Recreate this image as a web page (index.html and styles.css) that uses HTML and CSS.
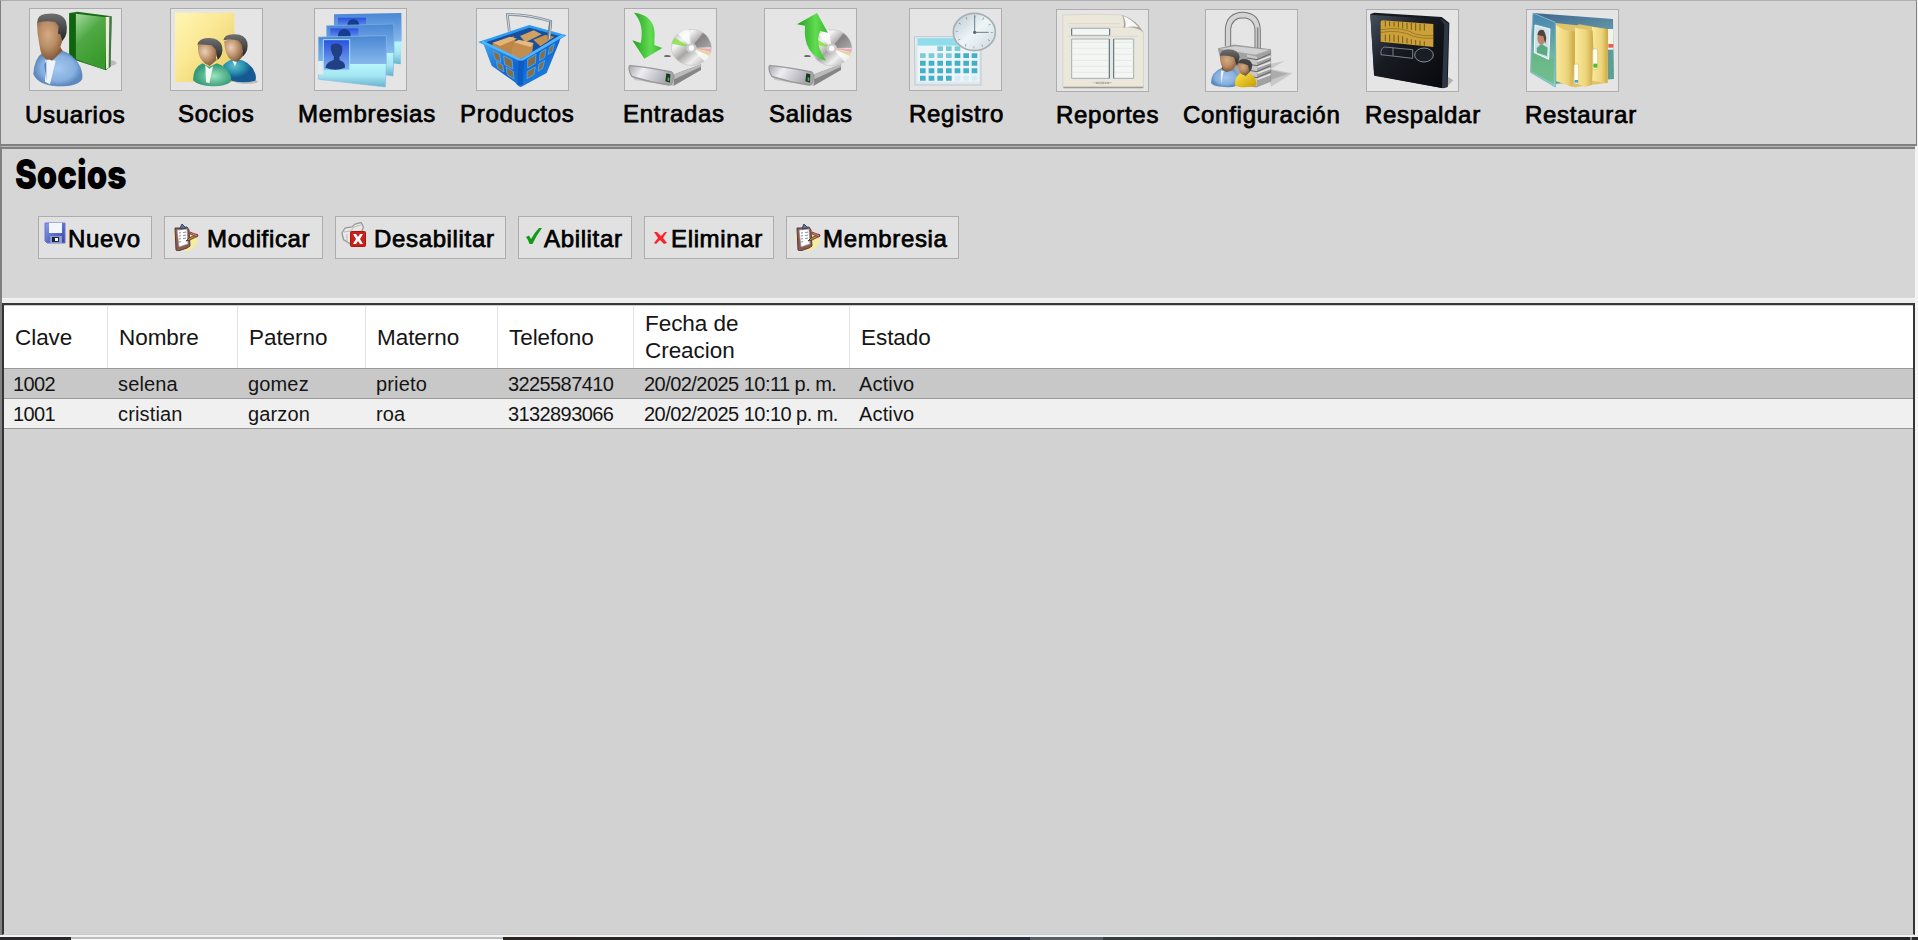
FILE: index.html
```html
<!DOCTYPE html>
<html lang="es">
<head>
<meta charset="utf-8">
<title>Socios</title>
<link rel="stylesheet" href="styles.css">
</head>
<body>
<svg class="defs" width="0" height="0">
  <defs>
    <radialGradient id="skin" cx=".4" cy=".4" r=".65"><stop offset="0" stop-color="#d5aa85"/><stop offset=".5" stop-color="#b88c64"/><stop offset="1" stop-color="#7c5233"/></radialGradient>
    <radialGradient id="pale" cx=".35" cy=".4" r=".65"><stop offset="0" stop-color="#ebd0b8"/><stop offset=".5" stop-color="#c59a76"/><stop offset="1" stop-color="#8b6040"/></radialGradient>
    <linearGradient id="hair" x2="0" y2="1"><stop offset="0" stop-color="#707070"/><stop offset="1" stop-color="#252525"/></linearGradient>
    <radialGradient id="blue" cx=".5" cy=".5"><stop offset="0" stop-color="#a5c8ef"/><stop offset=".7" stop-color="#86b0e0"/><stop offset="1" stop-color="#5c88be"/></radialGradient>
    <linearGradient id="book" x2=".5" y2="1"><stop offset="0" stop-color="#a6dca0"/><stop offset=".45" stop-color="#50a845"/><stop offset="1" stop-color="#389a2c"/></linearGradient>
    <linearGradient id="note" x2="1" y2="1"><stop offset="0" stop-color="#fff6b5"/><stop offset=".4" stop-color="#fbe996"/><stop offset="1" stop-color="#e7cb60"/></linearGradient>
    <radialGradient id="mint" cx=".55" cy=".55"><stop offset="0" stop-color="#98e5bd"/><stop offset="1" stop-color="#359a78"/></radialGradient>
    <radialGradient id="teal" cx=".35" cy=".3"><stop offset="0" stop-color="#68bdcc"/><stop offset=".6" stop-color="#288fae"/><stop offset="1" stop-color="#165a94"/></radialGradient>
    <linearGradient id="card" x2="0" y2="1"><stop offset="0" stop-color="#4a86d4"/><stop offset=".55" stop-color="#86b9ec"/><stop offset=".56" stop-color="#b5f6fb"/><stop offset=".78" stop-color="#a6e6f2"/><stop offset="1" stop-color="#67b1ce"/></linearGradient>
    <linearGradient id="photo" x2="0" y2="1"><stop offset="0" stop-color="#2b50e0"/><stop offset="1" stop-color="#7eb5ed"/></linearGradient>
    <linearGradient id="basket" x2="1" y2="1"><stop offset="0" stop-color="#49b1f5"/><stop offset=".5" stop-color="#1464cd"/><stop offset="1" stop-color="#238be3"/></linearGradient>
    <linearGradient id="arrow" x2="1"><stop offset="0" stop-color="#239d24"/><stop offset=".6" stop-color="#62dc50"/><stop offset="1" stop-color="#35b932"/></linearGradient>
    <linearGradient id="steel" x2="1" y2=".3"><stop offset="0" stop-color="#a5a5aa"/><stop offset=".35" stop-color="#ededf2"/><stop offset="1" stop-color="#a5a5ad"/></linearGradient>
    <linearGradient id="disc" x2="1" y2="1"><stop offset="0" stop-color="#a8a8a8"/><stop offset=".28" stop-color="#f5f5f5"/><stop offset=".5" stop-color="#a9a5a5"/><stop offset=".7" stop-color="#efefef"/><stop offset="1" stop-color="#999"/></linearGradient>
    <linearGradient id="face" x2="1" y2="1"><stop offset="0" stop-color="#b7c7d0"/><stop offset=".5" stop-color="#eef5f7"/><stop offset="1" stop-color="#ccd9de"/></linearGradient>
    <linearGradient id="gold" x2="1" y2="1"><stop offset="0" stop-color="#ffe94f"/><stop offset="1" stop-color="#c59a00"/></linearGradient>
    <linearGradient id="ink" x2="1" y2="1"><stop offset="0" stop-color="#46505e"/><stop offset=".4" stop-color="#191b23"/><stop offset="1" stop-color="#07080c"/></linearGradient>
    <linearGradient id="cover" x2="0" y2="1"><stop offset="0" stop-color="#4783b1"/><stop offset=".55" stop-color="#6fb4a1"/><stop offset="1" stop-color="#89d6c4"/></linearGradient>
    <linearGradient id="back" x2=".3" y2="1"><stop offset="0" stop-color="#3f638d"/><stop offset=".5" stop-color="#6299a8"/><stop offset="1" stop-color="#5e9f93"/></linearGradient>
    <linearGradient id="folder" x2="1"><stop offset="0" stop-color="#faea9c"/><stop offset=".6" stop-color="#ecd47c"/><stop offset="1" stop-color="#cca743"/></linearGradient>
    <linearGradient id="floppy" x2="1" y2="1"><stop offset="0" stop-color="#8aa0f0"/><stop offset="1" stop-color="#3440a5"/></linearGradient>
    <g id="drive">
      <path d="M632 198l90-36 40-4 84 36-4 15-80 48-118-18z" fill="#c9c9c9"/>
      <path d="M632 197l72-34q50-12 88 2l52 28-80 31z" fill="#e6e6e6"/>
      <path d="M764 222l80-30v17l-82 47z" fill="#858585"/><path d="M764 222l80-30v7l-80 38z" fill="#bbb"/>
      <path d="M634 196q66 7 122 19 8 4 4 24-2 16-13 15-56-8-106-24-8-2-12-20-3-17 5-14z" fill="url(#steel)" stroke="#999" stroke-width="4"/>
      <path d="M740 219l12 3-1 25-14-4z" fill="#183820"/><path d="M744 231l5 1v10l-5-1z" fill="#54aa55"/>
      <path d="M733 166q10-4 21 1l-3 3h-16z" fill="#666"/>
    </g>
    <g id="cd">
      <ellipse cx="815" cy="141" rx="60" ry="54" fill="url(#disc)" stroke="#c5c5c5" stroke-width="2"/>
      <path d="M815 142L775 101q16-13 32-14zM815 142l58 16q-6 16-18 25z" fill="#fff" opacity=".75"/>
      <path d="M815 142l35-45q23 18 25 44z" fill="#716e70" opacity=".6"/>
      <path d="M815 142l-58-12q2-10 8-18z" fill="#79e030" opacity=".75"/>
      <path d="M815 142l60 3-2 9z" fill="#eeabb5"/><path d="M815 142l58 14-4 10z" fill="#e5d6a0"/>
      <ellipse cx="815" cy="143" rx="16" ry="14" fill="#ccc"/><circle cx="815" cy="143" r="8" fill="#fff"/>
    </g>
    <g id="clipboard">
      <path d="M0 13l7-5 2-5 4 4 10 3 3 9-4 6-9 4z" fill="#fff17a" opacity=".65"/>
      <path d="M3 5l4 0 8-1 2 3 1 16-3 2-9 3-2-1z" fill="#8c5b4e" stroke="#563b3c"/>
      <path d="M5 7l10-1 1 15-9 3z" fill="#fff" stroke="#938a92" stroke-width=".7"/>
      <path d="M7 10l2-.3m2-.2l3-.4M7 13l2-.3m2-.2l3-.4M7 16l2-.3m2-.2l3-.4M7 19l2-.3" stroke="#8a8b9b"/>
      <path d="M8 6l1-3 1-2 2 2 2 2z" fill="#62739c" stroke="#38435e"/>
      <path d="M14 18l3-3 8-4 1 2-8 4z" fill="#bd863b" stroke="#493527" stroke-width=".8"/><path d="M18 9l8 3-1 2-7-3z" fill="#e0707b" stroke="#693c43" stroke-width=".8"/>
    </g>
  </defs>
</svg>

<div class="app">
  <nav class="toolbar">
    <a class="tool usuarios">
      <svg class="tile" viewBox="90 26 273 243" preserveAspectRatio="none">
        <ellipse cx="320" cy="188" rx="30" ry="10" fill="#bbb"/>
        <path d="M208 38l24-4 103 14-4 150-13 12-110-36z" fill="#176e18"/>
        <path d="M316 50l18-1-3 150-13 8z" fill="#eee9d8"/><path d="M328 50l7-1-3 150-6 5z" fill="#407746"/>
        <path d="M227 40l90 11-2 158-88-33z" fill="url(#book)"/><path d="M208 39l19 2v136l-19-8z" fill="#116310"/>
        <path d="M101 222q3-50 30-66l22 12 26-18q42 10 61 50 9 23 5 38-14 20-72 19-58-3-72-35z" fill="url(#blue)" stroke="#5b84b5" stroke-width="2"/>
        <path d="M135 181l18-5 14 6-17 70-15-8z" fill="#f0f4fa"/><path d="M140 172l16 9 32-30-8-12-29 5z" fill="#8a5b38"/><path d="M139 180l-6 14 6 48z" fill="#5a80b4"/>
        <path d="M111 66q34-21 76-3 11 23 2 53l-9 27q-18 42-42 33-15-6-19-38-8-35-8-72z" fill="url(#skin)"/>
        <path d="M112 67q-1-23 23-26 52-8 63 22 9 39-11 59l-6-20-7-2 2-22-10-13q-29-5-54 2z" fill="url(#hair)"/>
      </svg>
      <span class="label">Usuarios</span>
    </a>
    <a class="tool socios">
      <svg class="tile" viewBox="513 26 273 243" preserveAspectRatio="none">
        <path d="M525 37h178v208H525z" fill="url(#note)"/>
        <ellipse cx="740" cy="244" rx="34" ry="7" fill="#bcbcb8"/>
        <path d="M669 195q18-19 40-20 42 6 56 43 5 12 1 23-40 11-80-2z" fill="url(#teal)"/>
        <path d="M695 176l18 8 20-21-8-12-22 2z" fill="#815638"/><path d="M697 181l13 5-5 12z" fill="#edf4fa"/>
        <path d="M673 123q25-15 56-2 5 41-20 61-14 2-24-12-12-18-12-47z" fill="url(#pale)"/>
        <path d="M670 120q3-19 33-18 31-1 39 24 5 26-13 42l-3-34-10-13q-22-6-46-1z" fill="url(#hair)"/>
        <path d="M579 240q0-38 28-51l21 10 23-10q29 10 40 36 5 12 0 21-18 13-54 12-42-1-58-18z" fill="url(#mint)"/>
        <path d="M616 194l12 12 11-8-11 51-10-4z" fill="#f4f8f3"/><path d="M614 181l14 17 22-19-6-16z" fill="#8d6040"/>
        <path d="M594 134q24-13 56 1 10 28-12 53-18 13-31-7-15-16-13-47z" fill="url(#pale)"/>
        <path d="M592 133q5-21 35-20 31 0 39 24 6 24-13 42l-6-32-12-12q-23-3-43-2z" fill="url(#hair)"/>
      </svg>
      <span class="label">Socios</span>
    </a>
    <a class="tool membresias">
      <svg class="tile" viewBox="945 26 273 243" preserveAspectRatio="none">
        <path d="M1002 42l202-4q3 78-2 154l-35-5-165-30z" fill="url(#card)"/><path d="M1014 52h84v40h-84z" fill="url(#photo)"/><circle cx="1060" cy="74" r="18" fill="#173b8f"/>
        <path d="M980 76l201-5q3 80-2 156l-40-7-159-35z" fill="url(#card)" stroke="#7db0e0" stroke-width="2"/><path d="M991 84h84v40h-84z" fill="url(#photo)"/><circle cx="1033" cy="105" r="19" fill="#173b8f"/>
        <path d="M955 110l204-4q2 78-3 154L956 237z" fill="url(#card)" stroke="#8abae5" stroke-width="2"/>
        <path d="M954 182h16v40h-16z" fill="#e4e9ec"/>
        <path d="M970 118h79v91h-79z" fill="url(#photo)" stroke="#a6e4ff" stroke-width="3"/>
        <path d="M976 202q3-17 25-23l1-10q-14-20-8-36 18-9 31 3 7 20-7 34l1 10q18 5 16 22-28 12-59 0z" fill="#213f85"/>
      </svg>
      <span class="label">Membresias</span>
    </a>
    <a class="tool productos">
      <svg class="tile" viewBox="171 26 273 243" preserveAspectRatio="none">
        <path d="M185 126l143-48 102 28-124 78z" fill="#174f9b" stroke="#2d9df2" stroke-width="8"/>
        <path d="M268 93l-6-50q56-3 130 20l-6 55" fill="none" stroke="#7f8b98" stroke-width="8"/><path d="M268 93l-6-50q56-3 130 20l-6 55" fill="none" stroke="#d5dce2" stroke-width="3"/>
        <path d="M217 129l64-21 12 31-20 31-52-22z" fill="#bd8547"/><path d="M218 127l53-18 20 6-51 22z" fill="#e4b477"/>
        <path d="M300 107l41-17 24 12-49 24z" fill="#d1a064"/><path d="M340 118l35-14 28 5-42 29z" fill="#c98f4f"/>
        <path d="M278 137l9-14 53 9-7 47-60-7z" fill="#c48d50"/><path d="M282 126l14-8 45 10-9 12z" fill="#e6bb7e"/>
        <path d="M187 122l10 11 104 44 124-76-7 24-38 93-77 42q-8 0-18-14l-70-50z" fill="url(#basket)"/>
        <g fill="#8a6c42" stroke="#42a5ee" stroke-width="3"><path d="M218 152l20 9 5 25-18-9zM251 167l25 12 3 27-25-13zM229 184l19 10 4 21-19-12zM258 200l22 13 2 23-20-13z"/><path d="M323 177l25-15-2 27-23 14zM361 157l17-11-4 25-16 10zM389 140l14-10-6 24-13 8zM322 213l24-13-4 23-21 12zM357 191l17-11-6 24-14 9z"/></g>
        <path d="M186 124l117 56 127-76" fill="none" stroke="#50b5fc" stroke-width="8"/><path d="M303 181l-2 73" stroke="#0d5cc4" stroke-width="16"/>
        <path d="M386 116l6-52" stroke="#6f7e8c" stroke-width="9"/><path d="M388 116l5-52" stroke="#cbd3d9" stroke-width="3"/>
      </svg>
      <span class="label">Productos</span>
    </a>
    <a class="tool entradas">
      <svg class="tile" viewBox="616 26 273 243" preserveAspectRatio="none">
        <use href="#drive"/><use href="#cd"/>
        <path d="M643 37q60 7 62 63l-1 34 24 9-54 32-36-55 25 8q12-55-20-91z" fill="url(#arrow)"/>
      </svg>
      <span class="label">Entradas</span>
    </a>
    <a class="tool salidas">
      <svg class="tile" viewBox="1035 26 273 243" preserveAspectRatio="none">
        <use href="#drive" x="419"/><use href="#cd" x="420" y="1"/>
        <path d="M1131 72l60-34 33 59-23-5q-19 38 17 89-70-17-63-105z" fill="url(#arrow)"/>
      </svg>
      <span class="label">Salidas</span>
    </a>
    <a class="tool registro">
      <svg class="tile" viewBox="92 26 273 243" preserveAspectRatio="none">
        <path d="M105 109h200v145H107z" fill="#e0e8ec" stroke="#bccbd3" stroke-width="3"/><path d="M115 114h180v22H115z" fill="#8fdcea"/><path d="M115 136h184v108H115z" fill="#eef5f8"/>
        <g fill="#7dcbd5"><path d="M174 138h17v14h-17zM200 138h17v14h-17zM226 138h17v14h-17zM122 159h17v14h-17zM148 159h17v14h-17zM174 159h17v14h-17zM200 159h17v14h-17z"/></g>
        <g fill="#43afc8"><path d="M226 159h17v14h-17zM252 159h17v14h-17zM277 159h17v14h-17zM122 181h17v15h-17zM148 181h17v15h-17zM174 181h17v15h-17zM200 181h17v15h-17zM226 181h17v15h-17zM252 181h17v15h-17zM277 181h17v15h-17zM122 204h17v15h-17zM148 204h17v15h-17zM174 204h17v15h-17zM200 204h17v15h-17zM226 204h17v15h-17zM252 204h17v15h-17zM277 204h17v15h-17zM122 226h17v15h-17zM148 226h17v15h-17zM174 226h17v15h-17zM200 226h17v15h-17z"/></g>
        <path d="M226 226h17v15h-17zM252 226h17v15h-17zM277 226h17v15h-17z" fill="#d6edf5"/>
        <ellipse cx="285" cy="95" rx="63" ry="56" fill="url(#face)" stroke="#a8afb2" stroke-width="5"/>
        <ellipse cx="285" cy="95" rx="52" ry="46" fill="none" stroke="#7b898f" stroke-width="7" stroke-dasharray="2 23.6"/>
        <path d="M286 45v51h42" fill="none" stroke="#6a7f8b" stroke-width="3"/><circle cx="286" cy="96" r="5" fill="#526c79"/>
      </svg>
      <span class="label">Registro</span>
    </a>
    <a class="tool reportes low">
      <svg class="tile" viewBox="533 31 273 243" preserveAspectRatio="none">
        <path d="M552 257h240v9H552z" fill="#9a978f"/><path d="M550 46q100-4 178 0 38 15 64 50v165H550z" fill="#ece7db" stroke="#d1cbbd" stroke-width="2"/>
        <path d="M566 72h156M566 82h210M566 110h210" stroke="#d4d1c7" stroke-width="2"/>
        <path d="M577 86h114v21H577zM577 118h113v118H577zM703 118h60v118h-60z" fill="#f4f6f3" stroke="#9db0ba" stroke-width="3"/>
        <path d="M577 128h113m-113 18h113m-113 18h113m-113 18h113m-113 18h113m-113 18h113M703 128h60m-60 18h60m-60 18h60m-60 18h60m-60 18h60m-60 18h60" stroke="#dce0db" stroke-width="2"/>
        <path d="M577 87v20m114-20v20m-1 11v118m13-118v118" stroke="#54758a" stroke-width="3"/>
        <path d="M728 46q9 20 4 38 35-5 60 14-20-38-64-52z" fill="#aaa79f"/><path d="M732 49q24 9 45 33-20-4-39 2 3-18-6-35z" fill="#f8f8f4"/>
        <path d="M640 249q28-6 58 0-28 8-58 0" fill="none" stroke="#ccc8bd" stroke-width="2"/><path d="M650 250h40" stroke="#8a8880" stroke-width="3" stroke-dasharray="8 2 4 2"/>
      </svg>
      <span class="label">Reportes</span>
    </a>
    <a class="tool configuracion low">
      <svg class="tile" viewBox="979 31 273 243" preserveAspectRatio="none">
        <path d="M1162 195l54-12-43 25 65 13-64 40z" fill="#c8c8c8"/><path d="M1174 211l50 11-51 19z" fill="#999" opacity=".6"/>
        <path d="M1045 139V88q4-41 45-42 43 2 44 47v59" fill="none" stroke="#757575" stroke-width="19"/><path d="M1045 139V88q4-41 45-42 43 2 44 47v59" fill="none" stroke="#d4d4d4" stroke-width="13"/><path d="M1134 83v69" stroke="#888" stroke-width="5"/>
        <path d="M1016 147l47-11 110 14v95l-43 17-90-16z" fill="#a2a2a2" stroke="#888" stroke-width="2"/><path d="M1020 148l45-8 104 11-42 14z" fill="#d1d1d1"/>
        <path d="M1102 164l30 7v87l-30-8z" fill="#c8c8c8"/><path d="M1102 175l30 5 41-18m-71 31l30 5 41-18m-71 31l30 5 41-18m-71 31l30 5 41-18" fill="none" stroke="#666" stroke-width="3"/><path d="M1133 185l40-15m-40 33l40-15m-40 33l40-15m-40 33l40-15" stroke="#e8e8e8" stroke-width="5"/>
        <path d="M994 250q1-34 31-44l13 8 17-11q22 13 26 47-8 15-48 12-34-2-39-12z" fill="url(#blue)"/><path d="M1025 207l15 10 25-18-8-16-24 6z" fill="#784c2d"/><path d="M1024 213l8 1-8 40z" fill="#eef4fa"/>
        <path d="M1021 163q24-12 52 4 6 25-16 45-20 12-29-10-8-13-7-39z" fill="url(#skin)"/><path d="M1021 168q2-19 25-19 30 0 34 23l-8 28-9-27q-21-8-42-5z" fill="url(#hair)"/>
        <path d="M1065 255q1-29 25-37l8 10 12-9q20 13 21 35-8 9-36 9-24 0-30-8z" fill="url(#gold)"/><path d="M1085 215l12 15 14-14-5-12z" fill="#825332"/>
        <path d="M1075 189q18-7 37 1 3 19-11 34-15 7-21-10-5-10-5-25z" fill="url(#skin)"/><path d="M1074 190q4-12 20-12 20 0 24 18 0 13-8 21l-5-20q-15-7-31-7z" fill="#444"/>
      </svg>
      <span class="label">Configuración</span>
    </a>
    <a class="tool respaldar low">
      <svg class="tile" viewBox="51 31 273 243" preserveAspectRatio="none">
        <path d="M288 228l22 14-20 20z" fill="#b0b0b0"/>
        <path d="M61 43l12-4 202 13 23 18-5 192-14 4-206-38z" fill="#14181f"/>
        <path d="M61 45l208 14 18 16-10 190-205-38z" fill="url(#ink)"/>
        <path d="M269 55l27 17-6 190-14 3 7-190z" fill="#2e3745"/>
        <path d="M96 62l154 11v69L92 126V66z" fill="#cda137"/>
        <path d="M106 64v17m13-16v15m13-14v15m13-14v16m13-15v18m13-17v20m13-19v21m13-20v22m13-21v21m13-20v20M106 105v19m13-19v20m13-20v22m13-20v21m13-18v20m13-15v16m13-12v14m13-12v14m13-12v14m13-12v13" stroke="#705a20" stroke-width="3"/>
        <path d="M93 90q62-11 102 13 24 7 54 5M93 98q57-9 98 12 24 8 58 6" fill="none" stroke="#806622" stroke-width="2"/>
        <path d="M104 142l84 8v26L93 165q-2-20 11-23zM129 144v24" fill="none" stroke="#8d939d" stroke-width="2.5"/><ellipse cx="222" cy="166" rx="28" ry="21" fill="#191d24" stroke="#a0a4ac" stroke-width="2.5"/>
      </svg>
      <span class="label">Respaldar</span>
    </a>
    <a class="tool restaurar low">
      <svg class="tile" viewBox="531 31 273 243" preserveAspectRatio="none">
        <path d="M549 40l240 18 3 180-180 15z" fill="url(#back)"/>
        <path d="M618 70l62 7 8-3 86 15v160l-100 14-56-18z" fill="#dfc36b"/>
        <path d="M774 88h16v62h-16z" fill="#f5f2e9"/><path d="M775 133h15v11h-15z" fill="#ee5b4d"/>
        <path d="M726 82l48 7-2 162-46-8z" fill="url(#folder)"/>
        <path d="M675 84l53 9 2 56-4 106-20 7-31-12z" fill="url(#folder)"/>
        <path d="M618 76l24 14 32 5v99l-8 67-46-17z" fill="url(#folder)"/>
        <rect x="728" y="147" width="15" height="62" rx="6" fill="#fffdf2" stroke="#d9bf62" stroke-width="2"/><path d="M730 192h12v12h-12z" fill="#57ba34"/>
        <rect x="672" y="193" width="14" height="60" rx="6" fill="#fffdf2" stroke="#d9bf62" stroke-width="2"/><path d="M674 241h10v8h-10z" fill="#4ca5d1"/>
        <path d="M549 40l67 28v194l-74-44 3-110z" fill="url(#cover)" stroke="#81b7c8" stroke-width="3"/><path d="M545 162l66 14v77l-67-38z" fill="#66b574" opacity=".65"/>
        <path d="M555 76l45 12-4 91-43-20z" fill="#d0e1eb" stroke="#f0fafd" stroke-width="3"/>
        <path d="M560 145l14-13 19 12-2 25-30-10z" fill="#5aa980"/><ellipse cx="574" cy="115" rx="12" ry="20" fill="#bb866a"/><path d="M562 106q3-20 19-14 12 19 5 41l-6-23z" fill="#51453c"/>
      </svg>
      <span class="label">Restaurar</span>
    </a>
  </nav>

  <main class="panel">
    <header class="panel-head">
      <h1>Socios</h1>
      <div class="actions">
        <button class="btn nuevo"><svg viewBox="0 0 22 22"><path d="M1 1h20v20H3l-2-2z" fill="url(#floppy)" stroke="#6a75cc"/><path d="M5 1h13v10H5z" fill="#f1f6ff"/><path d="M6 14h12v7H6z" fill="#8d9cc8"/><path d="M8 15h7v5H8z" fill="#182444"/><path d="M11 16h3v3h-3z" fill="#fff"/></svg><span>Nuevo</span></button>
        <button class="btn modificar"><svg viewBox="0 0 28 28"><use href="#clipboard"/></svg><span>Modificar</span></button>
        <button class="btn desabilitar"><svg viewBox="0 0 26 26"><path d="M1 11l3-5 7-1 3-3 6-1.500 2.500 4.500-2 5-1 11-11 .5-6-4z" fill="#e8e8e6" stroke="#999" stroke-width="1.300"/><path d="M3 10l7-1 3-4 7-2M6 12v9M11 10l10-1" fill="none" stroke="#bbb"/><rect x="9.500" y="9.500" width="15" height="15" rx="1" fill="#c92117" stroke="#a51812"/><path d="M12 12h3l2 3 2-3h3l-3 5 3 5h-3l-2-3-2 3h-3l3-5z" fill="#fff"/></svg><span>Desabilitar</span></button>
        <button class="btn abilitar"><svg viewBox="0 0 16 17"><path d="M0 9l3-1.500 2 3.500Q9 4 13 0h3Q10 8 6.500 16H3.500Q2.500 12 0 9z" fill="#139a18"/></svg><span>Abilitar</span></button>
        <button class="btn eliminar"><svg viewBox="0 0 15 14"><path d="M1 1h3l4 4 4-4h2l-4 6 4 5-3 1-4-4-4 4-2-1 4-5z" fill="#f8262a"/></svg><span>Eliminar</span></button>
        <button class="btn membresia"><svg viewBox="0 0 28 28"><use href="#clipboard"/></svg><span>Membresia</span></button>
      </div>
    </header>
    <section class="grid">
      <div class="row head"><span>Clave</span><span>Nombre</span><span>Paterno</span><span>Materno</span><span>Telefono</span><span>Fecha de<br>Creacion</span><span>Estado</span></div>
      <div class="row selected"><span class="num">1002</span><span>selena</span><span>gomez</span><span>prieto</span><span class="num">3225587410</span><span class="num date">20/02/2025 10:11 p. m.</span><span>Activo</span></div>
      <div class="row"><span class="num">1001</span><span>cristian</span><span>garzon</span><span>roa</span><span class="num">3132893066</span><span class="num date">20/02/2025 10:10 p. m.</span><span>Activo</span></div>
    </section>
  </main>
  <footer class="taskbar"><i class="start"></i><i class="window"></i><i class="dark"></i><i class="item"></i><i class="rest"></i><i class="mark"></i><i class="end"></i></footer>
</div>
</body>
</html>
```
FILE: styles.css
```css
* { box-sizing: border-box; }
body { margin: 0; font-family: "Liberation Sans", Arial, sans-serif; color: #000; background: #f4f4f4; overflow: hidden; }
.defs { position: absolute; }
.app { width: 1918px; height: 940px; display: flex; flex-direction: column; }

.toolbar {
  width: 1917px; height: 146px; flex: none;
  padding: 7px 0 0 25px;
  display: grid;
  grid-template-columns: 144px 128px 162px 164px 140px 144px 148px 127px 183px 160px 1fr;
  background: #d6d6d6;
  border: 1px solid #808080; border-top-color: #b0b0b0; border-bottom: 2px solid #808080;
}
.tool { display: flex; flex-direction: column; align-items: flex-start; }
.low { padding-top: 1px; }
.tile { display: block; flex: none; width: 93px; height: 83px; background: #e5e5e5; border: 1px solid #adadad; }
.label { margin: 9px 0 0 0; font-size: 24px; line-height: 28px; letter-spacing: .72px; white-space: nowrap; -webkit-text-stroke: .75px #000; }
.usuarios .tile { margin-left: 3px; }
.usuarios .label { margin: 10px 0 0 -1px; }
.membresias .tile, .productos .tile { margin-left: 16px; }
.registro .tile { margin-left: 1px; }
.configuracion .tile { margin-left: 22px; }
.socios .label { margin-left: 8px; }
.entradas .label, .respaldar .label, .restaurar .label { margin-left: -1px; }
.salidas .label { margin-left: 5px; }
.registro .label { margin-left: 1px; }

.panel { width: 1915px; height: 789px; flex: none; border-left: 2px solid #808080; border-top: 1px solid #b8b8b8; display: flex; flex-direction: column; }
.panel-head { height: 151px; flex: none; background: #d6d6d6; border-top: 2px solid #808080; padding: 1px 0 0 13px; }
h1 { margin: 0; height: 48px; font: 900 41px/48px Inter, "Liberation Sans", sans-serif; letter-spacing: 0; transform: scaleX(.8); transform-origin: left; width: 180px; }
.actions { display: flex; gap: 12px; padding: 18px 0 0 23px; }
.btn { height: 43px; flex: none; border: 1px solid #adadad; background: #e1e1e1; padding: 0; display: flex; align-items: flex-start; font: 24px/28px "Liberation Sans", Arial, sans-serif; letter-spacing: .65px; color: #000; white-space: nowrap; }
.btn span { margin-top: 8px; -webkit-text-stroke: .75px #000; }
.btn svg { flex: none; display: block; }
.nuevo { width: 114px; } .nuevo svg { width: 22px; height: 22px; margin: 5px 2px 0 5px; }
.modificar { width: 159px; } .modificar svg, .membresia svg { width: 28px; height: 28px; margin: 6px 7px 0 7px; }
.desabilitar { width: 171px; } .desabilitar svg { width: 26px; height: 26px; margin: 5px 7px 0 5px; }
.abilitar { width: 114px; } .abilitar svg { width: 16px; height: 17px; margin: 11px 2px 0 7px; }
.eliminar { width: 130px; } .eliminar svg { width: 15px; height: 14px; margin: 14px 3px 0 8px; }
.membresia { width: 173px; } .membresia svg { margin-right: 1px; }

.grid { flex: 1; margin-top: 5px; background: #d2d2d2; border: 2px solid #343434; border-top-color: #383838; border-bottom: 1px solid #ccc; box-shadow: 0 -4px #eee; }
.row { display: grid; grid-template-columns: 104px 130px 128px 132px 136px 216px 1fr; height: 30px; align-items: center; font-size: 20px; letter-spacing: .15px; color: #151515; background: #f0f0f0; border-bottom: 1px solid #999; }
.row span { padding-left: 10px; padding-top: 2px; white-space: nowrap; }
.row span:first-child, .row span:last-child { padding-left: 9px; }
.row .num { letter-spacing: -.6px; }
.row .date { letter-spacing: -.54px; }
.row.selected { background: #c8c8c8; }
.row.head { height: 64px; background: #fff; font-size: 22.5px; line-height: 27px; letter-spacing: -.05px; align-items: stretch; border-top: 1px solid #ccc; }
.row.head span { display: flex; align-items: center; padding: 0 0 0 11px; border-right: 1px solid #e3e3e3; }
.row.head span:last-child { border-right: 0; }

.taskbar { flex: 1; display: flex; border-top: 2px solid #f2f2f2; background: #29272a; }
.taskbar i { display: block; }
.start { width: 71px; }
.window { width: 432px; background: #fafafa; border-top: 2px solid #bdbdbd; }
.dark { width: 527px; background: linear-gradient(90deg, #2a2422, #262529 60%, #26303e); }
.item { width: 73px; background: #565f63; }
.rest { width: 807px; background: linear-gradient(90deg, #35403e, #29272b 30%, #25252a); }
.mark { width: 2px; background: #888; }
.end { flex: 1; }
```
